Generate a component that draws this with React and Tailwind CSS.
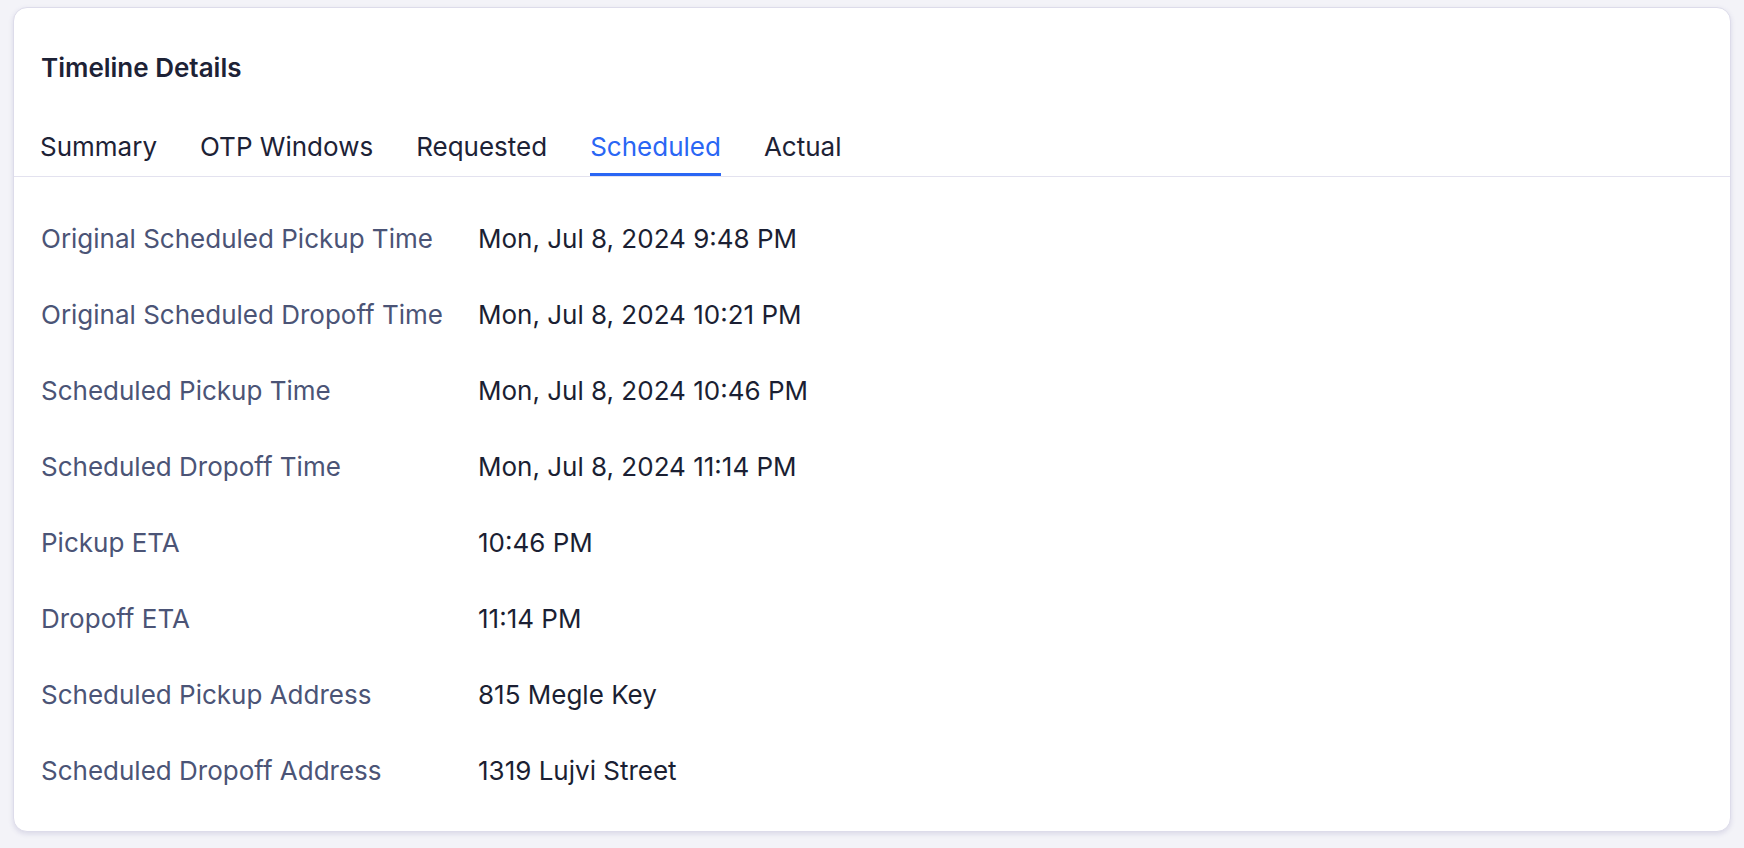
import React, { useState } from 'react';

const tabs = ['Summary', 'OTP Windows', 'Requested', 'Scheduled', 'Actual'];

const rows = [
  ['Original Scheduled Pickup Time', 'Mon, Jul 8, 2024 9:48 PM'],
  ['Original Scheduled Dropoff Time', 'Mon, Jul 8, 2024 10:21 PM'],
  ['Scheduled Pickup Time', 'Mon, Jul 8, 2024 10:46 PM'],
  ['Scheduled Dropoff Time', 'Mon, Jul 8, 2024 11:14 PM'],
  ['Pickup ETA', '10:46 PM'],
  ['Dropoff ETA', '11:14 PM'],
  ['Scheduled Pickup Address', '815 Megle Key'],
  ['Scheduled Dropoff Address', '1319 Lujvi Street'],
];

export default function App() {
  const [active, setActive] = useState('Scheduled');

  return (
    <div
      className="min-h-screen bg-[#f3f3f8] px-[13px] pt-[7px] pb-[16px]"
      style={{ fontFamily: 'Inter, "Noto Sans", sans-serif' }}
    >
      <div className="rounded-[14px] border border-[#dddcea] bg-white shadow-[0_2px_5px_rgba(90,80,150,0.16)]">
        {/* Header */}
        <div className="px-[27px] pt-[44px]">
          <h2 className="text-[26px] leading-[32px] font-semibold text-[#1d2236]">
            Timeline Details
          </h2>
        </div>

        {/* Tabs */}
        <div className="mt-[47px] flex gap-[43px] border-b border-[#e3e2ef] px-[26px]">
          {tabs.map((t) => (
            <button
              key={t}
              onClick={() => setActive(t)}
              className={
                'border-b-[3px] pb-[10px] text-[26px] leading-[32px] ' +
                (t === active
                  ? 'border-[#2a66f4] text-[#2a66f4]'
                  : 'border-transparent text-[#1d2236]')
              }
            >
              {t}
            </button>
          ))}
        </div>

        {/* Rows */}
        <div className="flex flex-col gap-[44px] px-[27px] pt-[46px] pb-[44px]">
          {rows.map(([label, value]) => (
            <div key={label} className="flex text-[26px] leading-[32px]">
              <div className="w-[437px] shrink-0 text-[#4b5476]">{label}</div>
              <div className="text-[#1b1f33]">{value}</div>
            </div>
          ))}
        </div>
      </div>
    </div>
  );
}
